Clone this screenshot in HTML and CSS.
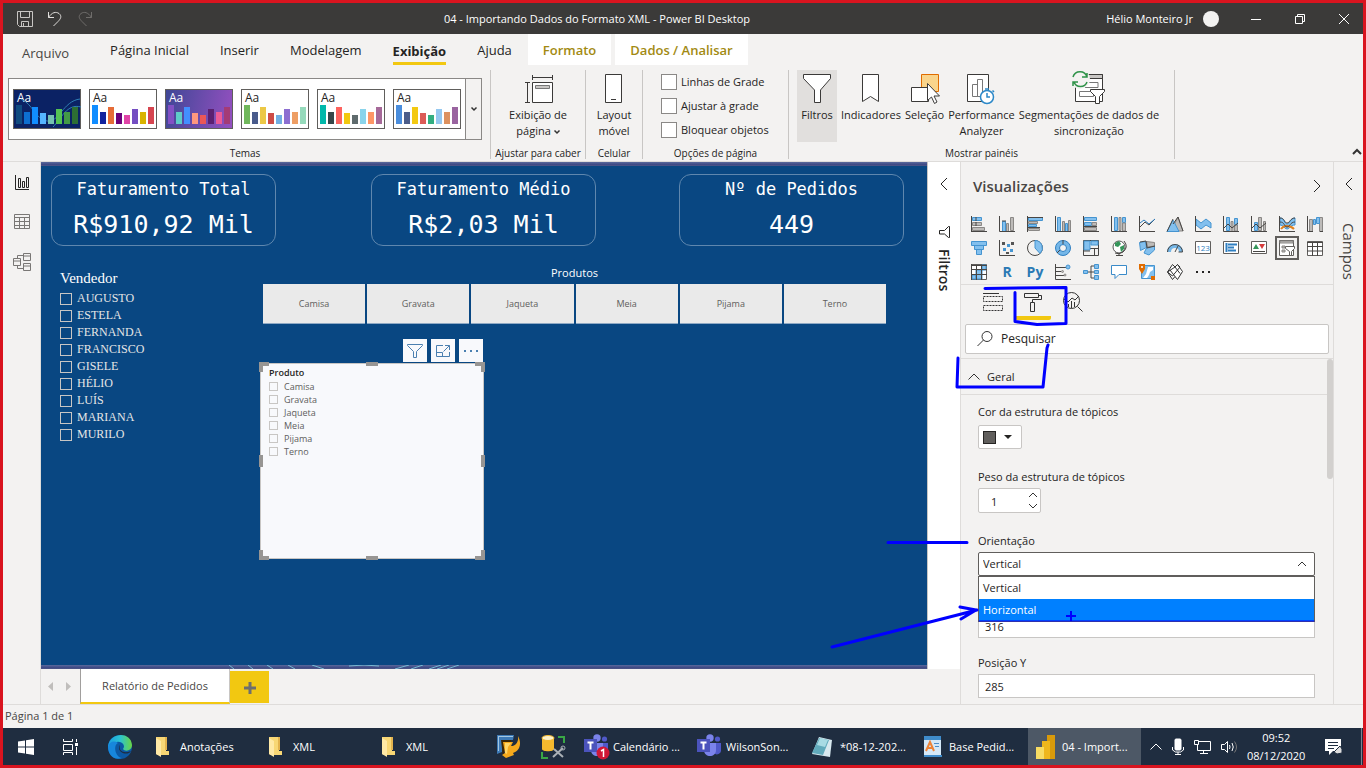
FILE: index.html
```html
<!DOCTYPE html>
<html lang="pt-BR">
<head>
<meta charset="utf-8">
<meta name="viewport" content="width=device-width, initial-scale=1">
<title>04 - Importando Dados do Formato XML - Power BI Desktop</title>
<link rel="stylesheet" href="styles.css">
</head>
<body>
<svg class="defs" aria-hidden="true">
  <symbol id="theme-bars" viewBox="0 0 68 40">
    <path fill="var(--c1)" d="M3 35V16h6v19z"/><path fill="var(--c2)" d="M11 35V23h6v12z"/><path fill="var(--c3)" d="M19 35V18h6v17z"/><path fill="var(--c4)" d="M27 35V24h6v11z"/><path fill="var(--c5)" d="M35 35V26h6v9z"/><path fill="var(--c6)" d="M43 35V20h6v15z"/><path fill="var(--c7)" d="M51 35V23h6v12z"/><path fill="var(--c8)" d="M59 35V18h6v17z"/>
  </symbol>
  <symbol id="folder" viewBox="0 0 16 20">
    <path fill="#f8d775" d="M1 0h10v14h3v4H3L1 17z"/><path fill="#e3b34e" d="M10 0l2 0v13h-2z"/><path fill="#ffe9a6" d="M1 1l5 3v16l-5-3z"/>
  </symbol>
  <symbol id="teams" viewBox="0 0 24 24">
    <circle cx="20.500" cy="5" r="2.600" fill="#5059c9"/><circle cx="13" cy="4" r="3.700" fill="#7b83eb"/>
    <path fill="#5059c9" d="M16 9h8v7a4 4 0 0 1-7 3z"/><path fill="#7b83eb" d="M7 9h12v7c0 8-12 8-12 0z"/>
    <path fill="#4b53bc" d="M0 5h13v13H0z"/><path stroke="#fff" stroke-width="2" d="M3.500 8.500h6M6.500 8v7.500"/>
  </symbol>
</svg>

<header class="titlebar">
  <div class="quick">
    <button aria-label="Salvar"><svg width="16" height="16" fill="none" stroke="#c8c6c4"><path d="M.5.5h15v15h-13l-2-2zM3.500.5v6h9v-6M4.500 15v-4.500h7V15M6.500 12v3"/></svg></button>
    <button aria-label="Desfazer"><svg width="16" height="16" fill="none" stroke="#e1dfdd"><path d="M1.500 1v5.500H7M1.500 6.500C5 1 9 .5 12 2.500c3 2.500 2 5-1 8L6.500 15"/></svg></button>
    <button aria-label="Refazer"><svg width="16" height="16" fill="none" stroke="#6f6d6b"><path d="M14.500 1v5.500H9M14.500 6.500C11 1 7 .5 4 2.500c-3 2.500-2 5 1 8L9.500 15"/></svg></button>
  </div>
  <h1 class="doc-title">04 - Importando Dados do Formato XML - Power BI Desktop</h1>
  <div class="account"><span>Hélio Monteiro Jr</span><span class="avatar"></span></div>
  <div class="window-buttons">
    <button aria-label="Minimizar"><svg width="12" height="12" stroke="#fff"><path d="M1 6.500h10"/></svg></button>
    <button aria-label="Restaurar"><svg width="12" height="12" fill="none" stroke="#fff"><path d="M1.500 3.500h7v7h-7zM3.500 3V1.500h7v7H9"/></svg></button>
    <button aria-label="Fechar"><svg width="12" height="12" stroke="#fff"><path d="M1 1l10 10M11 1L1 11"/></svg></button>
  </div>
</header>

<nav class="tabs">
  <button class="tab file">Arquivo</button>
  <button class="tab">Página Inicial</button>
  <button class="tab">Inserir</button>
  <button class="tab">Modelagem</button>
  <button class="tab active"><span>Exibição</span></button>
  <button class="tab">Ajuda</button>
  <button class="tab context">Formato</button>
  <button class="tab context">Dados / Analisar</button>
</nav>

<section class="ribbon">
  <div class="group themes">
    <div class="gallery">
      <button class="theme t1">Aa<svg><path fill="none" stroke="#2f7fb5" stroke-width="1" d="M8 10c12 5 14 20 26 22s16-20 33-22M40 38c8-8 14-24 28-20"/><use href="#theme-bars"/></svg></button>
      <button class="theme t2">Aa<svg><use href="#theme-bars"/></svg></button>
      <button class="theme t3">Aa<svg><use href="#theme-bars"/></svg></button>
      <button class="theme t4">Aa<svg><use href="#theme-bars"/></svg></button>
      <button class="theme t5">Aa<svg><use href="#theme-bars"/></svg></button>
      <button class="theme t6">Aa<svg><use href="#theme-bars"/></svg></button>
      <button class="more" aria-label="Mais temas"><svg width="6" height="4" fill="none" stroke="#333" stroke-width="1.500"><path d="M.5.5L3 3 5.500.5"/></svg></button>
    </div>
    <div class="caption">Temas</div>
  </div>
  <div class="group fit">
    <div class="tools"><button class="tool"><svg width="30" height="30" fill="none" stroke="#3b3a39"><path d="M9.500 1v5M29.500 1v5M9.500 3.500h20M2 8.500h5M2 28.500h5M4.500 8.500v20"/><path fill="#fff" d="M9.500 8.500h20v20h-20z"/><path fill="#c8c6c4" stroke="#777" d="M12.500 11.500h14v3h-14z"/></svg><span>Exibição de<br>página <svg class="chev" width="6" height="4" fill="none" stroke="#333" stroke-width="1.500"><path d="M.5.5L3 3 5.500.5"/></svg></span></button></div>
    <div class="caption">Ajustar para caber</div>
  </div>
  <div class="group mobile">
    <div class="tools"><button class="tool"><svg width="18" height="30" stroke="#3b3a39"><path fill="#fff" d="M.5.5h16v28H.5z"/><path d="M6 25.500h5"/></svg><span>Layout<br>móvel</span></button></div>
    <div class="caption">Celular</div>
  </div>
  <div class="group options">
    <div class="checks">
      <label><input type="checkbox">Linhas de Grade</label>
      <label><input type="checkbox">Ajustar à grade</label>
      <label><input type="checkbox">Bloquear objetos</label>
    </div>
    <div class="caption">Opções de página</div>
  </div>
  <div class="group panes">
    <div class="tools">
      <button class="tool pressed"><svg width="28" height="30" fill="#fff" stroke="#3b3a39"><path d="M.5.5h27v4L17.500 16v12.500h-6V16L.5 4.500z"/></svg><span>Filtros</span></button>
      <button class="tool"><svg width="18" height="30" fill="#fff" stroke="#3b3a39"><path d="M.5.5h16v27l-8-5-8 5z"/></svg><span>Indicadores</span></button>
      <button class="tool"><svg width="30" height="30"><path fill="#f9d48b" stroke="#e06c00" d="M11.500.5h17v17h-17z"/><path fill="#fff" stroke="#3b3a39" d="M1.500 13.500h17v14h-17z"/><path fill="#fff" stroke="#3b3a39" d="M17.500 9.500v17l4-3.500 3 6.500 2.500-1.500-3-6h5.500z"/></svg><span>Seleção</span></button>
      <button class="tool"><svg width="28" height="30" fill="#fff" stroke="#3b3a39"><path d="M.5.5h21v27H.5z"/><path stroke="#777" d="M5.500 10.500h5v12h-5zM10.500 5.500h5v17h-5z"/><circle cx="20" cy="23" r="6.500" stroke="#2b88c8" stroke-width="1.500"/><path fill="none" stroke="#2b88c8" stroke-width="1.500" d="M20 19v4h3M18 15h4M25.500 16.500l1.500 1.500"/></svg><span>Performance<br>Analyzer</span></button>
      <button class="tool"><svg width="34" height="30" fill="none" stroke="#3b3a39"><path fill="#fff" d="M3.500.5h27v27h-27z"/><path fill="#c8c6c4" d="M15 .5h15.500v4H15z"/><path stroke="#777" d="M15 8.500h11v5H13M7.500 17.500h14v5h-14z"/><path fill="#fff" d="M18.500 15.500h14v2l-5 5v7h-4v-7l-5-5z"/><circle cx="8" cy="5" r="10" fill="#f3f2f1" stroke="none"/><path stroke="#2e9248" stroke-width="1.500" d="M1 3c2-7 12-7 14 0M15 -1v4h-5M15 8C13 14 4 14 2 8M1 12V8h5"/></svg><span>Segmentações de dados de<br>sincronização</span></button>
    </div>
    <div class="caption">Mostrar painéis</div>
  </div>
  <button class="collapse" aria-label="Recolher"><svg width="10" height="6" fill="none" stroke="#333" stroke-width="2"><path d="M1 5l4-4 4 4"/></svg></button>
</section>

<main class="workspace">
  <nav class="views">
    <button aria-label="Relatório"><svg width="16" height="16" fill="none" stroke="#252423"><path d="M1.500 0v14.500H15M4.500 3.500h2v9h-2zM8.500 6.500h2v6h-2zM12.500 2.500h2v10h-2z"/></svg></button>
    <button aria-label="Dados"><svg width="16" height="16" fill="none" stroke="#797775"><path d="M.5.5h15v14H.5zM0 3.500h16M0 7.500h16M0 11.500h16M5.500 3v12M10.500 3v12"/></svg></button>
    <button aria-label="Modelo"><svg width="18" height="18" fill="none" stroke="#797775"><path d="M.5 5.500h7v7h-7zM.5 8h7M10.500.5h7v7h-7zM10.500 3h7M10.500 10.500h7v7h-7zM10.500 13h7M4.500 5V2.500h6M4.500 13v2.500h6"/></svg></button>
  </nav>

  <div class="center">
    <div class="stage">
      <section class="canvas">
        <div class="edge"></div>
        <div class="report">
          <div class="cards">
            <article class="card"><h2>Faturamento Total</h2><p>R$910,92 Mil</p></article>
            <article class="card"><h2>Faturamento Médio</h2><p>R$2,03 Mil</p></article>
            <article class="card"><h2>Nº de Pedidos</h2><p>449</p></article>
          </div>
          <div class="visuals">
            <fieldset class="sellers">
              <legend>Vendedor</legend>
              <label><input type="checkbox">AUGUSTO</label>
              <label><input type="checkbox">ESTELA</label>
              <label><input type="checkbox">FERNANDA</label>
              <label><input type="checkbox">FRANCISCO</label>
              <label><input type="checkbox">GISELE</label>
              <label><input type="checkbox">HÉLIO</label>
              <label><input type="checkbox">LUÍS</label>
              <label><input type="checkbox">MARIANA</label>
              <label><input type="checkbox">MURILO</label>
            </fieldset>
            <div class="products">
              <h3>Produtos</h3>
              <div class="tiles">
                <button>Camisa</button><button>Gravata</button><button>Jaqueta</button><button>Meia</button><button>Pijama</button><button>Terno</button>
              </div>
              <div class="selected">
                <div class="actions">
                  <button aria-label="Filtros"><svg width="18" height="16" fill="none" stroke="#4a7fb0"><path d="M1.500 1.500h15v1l-6 6v6h-3v-6l-6-6z"/></svg></button>
                  <button aria-label="Modo de foco"><svg width="16" height="14" fill="none" stroke="#4a7fb0"><path d="M8 1.500H1.500v11h13V8M1.500 8.500h6v4M8.500 7.500l6-6M10 1.500h4.500V6"/></svg></button>
                  <button aria-label="Mais opções"><svg width="16" height="4" fill="#4a7fb0"><path d="M1 1h2v2H1zM7 1h2v2H7zM13 1h2v2h-2z"/></svg></button>
                </div>
                <fieldset class="slicer">
                  <legend>Produto</legend>
                  <label><input type="checkbox">Camisa</label>
                  <label><input type="checkbox">Gravata</label>
                  <label><input type="checkbox">Jaqueta</label>
                  <label><input type="checkbox">Meia</label>
                  <label><input type="checkbox">Pijama</label>
                  <label><input type="checkbox">Terno</label>
                  <svg class="handles" viewBox="0 0 226 198" preserveAspectRatio="none" fill="#979593"><path d="M0 0h10v4H4v6H0zM107 0h12v4h-12zM216 0h10v10h-4V4h-6zM0 93h4v12H0zM222 93h4v12h-4zM0 188h4v6h6v4H0zM107 194h12v4h-12zM222 188h4v10h-10v-4h6z"/></svg>
                </fieldset>
              </div>
            </div>
          </div>
        </div>
        <div class="edge"><svg viewBox="0 0 886 4" preserveAspectRatio="none" fill="none" stroke="#76b9d2"><path d="M188 0l5 4M207 0l5 4M226 0l6 4M247 0l7 4M271 0l12 4M308 1q15-2 30 0M354 4l14-4M370 4l12-4M388 4l12-4M396 4l12-4M406 4l12-4"/></svg></div>
      </section>
      <aside class="filters">
        <button aria-label="Expandir filtros"><svg width="8" height="14" fill="none" stroke="#252423"><path d="M7 1L1 7l6 6"/></svg></button>
        <svg width="12" height="12" fill="none" stroke="#252423"><path d="M11.500.5v11h-1L6.500 8H1.500V4.500h5l4-4z"/></svg>
        <h2>Filtros</h2>
      </aside>
    </div>
    <div class="pages">
      <button class="arrow" aria-label="Anterior"><svg width="5" height="9" fill="#c0bebc"><path d="M5 0v9L0 4.500z"/></svg></button>
      <button class="arrow" aria-label="Próxima"><svg width="5" height="9" fill="#c0bebc"><path d="M0 0v9l5-4.500z"/></svg></button>
      <button class="page">Relatório de Pedidos</button>
      <button class="add" aria-label="Nova página"><svg width="12" height="12" stroke="#6e6e6e" stroke-width="3"><path d="M6 0v12M0 6h12"/></svg></button>
    </div>
  </div>

  <aside class="pane">
    <header class="pane-head"><h2>Visualizações</h2><button aria-label="Recolher"><svg width="8" height="14" fill="none" stroke="#252423"><path d="M1 1l6 6-6 6"/></svg></button></header>
    <div class="visual-types">
      <button aria-label="Barras empilhadas"><svg class="vi"><path class="g" d="M1.500 6.500h9v3h-9zM1.500 11.500h12v3h-12z"/><path class="b" d="M1.500 1.500h9v3h-9z"/><path class="a" d="M.5 0v16M5 1v4M5 6v4M0 15.500h16"/></svg></button>
      <button aria-label="Colunas empilhadas"><svg class="vi"><path class="g" d="M11.500 1.500h3v13h-3zM7.500 7.500h2v8h-2z"/><path class="b" d="M3.500 5.500h3v10h-3z"/><path class="a" d="M.5 0v15.500H16M3 5h4"/></svg></button>
      <button aria-label="Barras clusterizadas"><svg class="vi"><path class="b" d="M1.500 1.500h14v3h-14zM1.500 8.500h8v2h-8z"/><path class="g" d="M1.500 5.500h9v2h-9zM1.500 12.500h11v2h-11z"/><path class="a" d="M.5 0v16M1 1.500h15M1 11.500h12"/></svg></button>
      <button aria-label="Colunas clusterizadas"><svg class="vi"><path class="b" d="M2.500 1.500h3v14h-3zM10.500 7.500h2v8h-2z"/><path class="g" d="M7.500 5.500h2v10h-2zM13.500 4.500h2v11h-2z"/><path class="a" d="M.5 0v15.500H16"/></svg></button>
      <button aria-label="Barras 100%"><svg class="vi"><path class="b" d="M1.500 1.500h12v3h-12zM1.500 6.500h7v3h-7z"/><path class="g" d="M9 6.500h4.500v3H9zM1.500 11.500h12v3h-12z"/><path class="a" d="M.5 0v16M0 15.500h16M1 10.500h13"/></svg></button>
      <button aria-label="Colunas 100%"><svg class="vi"><path class="b" d="M3.500 1.500h3v13h-3zM11.500 1.500h3v5h-3z"/><path class="g" d="M8 1.500h2v13H8zM11.500 7h3v8h-3z"/><path class="a" d="M.5 0v15.500H16"/></svg></button>
      <button aria-label="Linhas"><svg class="vi"><path class="a" d="M.5 0v15.500H16M1 11l5-5 4 3 6-6"/><path class="l" d="M1 7l4-3 5 4 6-5"/></svg></button>
      <button aria-label="Área"><svg class="vi"><path class="g" d="M4 15l7-14 5 14z"/><path class="b" d="M0 15.500L6 4l6 11.500z"/><path class="a" d="M0 15.500L6 3M6 8l5-7 5 14"/></svg></button>
      <button aria-label="Área empilhada"><svg class="vi"><path class="b" d="M1 3l5 4 5-4 5 4v5l-5-3-5 4-5-4z"/><path class="a" d="M.5 0v15.500H16"/></svg></button>
      <button aria-label="Linha e coluna empilhada"><svg class="vi"><path class="b" d="M3.500 1.500h3v13h-3zM11.500 2.500h3v6h-3z"/><path class="g" d="M8 5.500h2v10H8zM11.500 9h3v6h-3z"/><path class="a" d="M.5 0v15.500H16M1 12l4-4 4 4 6-5"/></svg></button>
      <button aria-label="Linha e coluna"><svg class="vi"><path class="b" d="M3.500 6.500h3v8h-3z"/><path class="g" d="M7.500 1.500h3v13h-3zM12.500 5.500h2v9h-2z"/><path class="a" d="M.5 0v15.500H16M1 12l4-4 4 4 6-5"/></svg></button>
      <button aria-label="Faixa de opções"><svg class="vi"><path class="b" d="M1 2c5 0 4 6 7 6s3-6 8-6v7c-5 0-5 4-8 4s-3-4-7-4z"/><path class="o" d="M2 13c3-4 4-3 6-3s4 0 7 3"/><path class="a" d="M.5 0v15.500H16M1 2c5 0 4 5 7 5s3-5 8-5M1 6c5 0 4 5 7 5s3-5 8-5"/></svg></button>
      <button aria-label="Cascata"><svg class="vi"><path class="g" d="M2.500 3.500h3v12h-3zM12.500 1.500h3v14h-3z"/><path class="b" d="M6.500 3.500h2v5h-2zM9.500 1.500h3v6h-3z"/><path class="a" d="M.5 0v15.500H6M13 15.500h3"/></svg></button>
      <button aria-label="Funil"><svg class="vi"><path class="b" d="M.5 1.500h15v4H.5zM3.500 5.500h9v4h-9zM5.500 9.500h5v5h-5z"/></svg></button>
      <button aria-label="Dispersão"><svg class="vi"><path class="a" d="M.5 0v15.500H16"/><path fill="#4696d2" d="M4 8h3v3H4zM8 4h3v3H8zM11 9h3v3h-3z"/><path fill="#555" d="M3 2h3v3H3zM12 2h3v3h-3zM7 12h3v2H7z"/></svg></button>
      <button aria-label="Pizza"><svg class="vi"><circle class="a" cx="8" cy="8" r="7.500"/><path class="b" d="M8 .5a7.500 7.500 0 0 1 5 13L8 8z"/></svg></button>
      <button aria-label="Rosca"><svg class="vi"><circle cx="8" cy="8" r="5.500" fill="none" stroke="#75b7e8" stroke-width="4"/><circle class="l" cx="8" cy="8" r="7.500"/><circle class="l" cx="8" cy="8" r="3.500"/><path class="a" d="M8 0v4M2 13l3-3"/></svg></button>
      <button aria-label="Treemap"><svg class="vi"><path class="a" d="M.5 .5h15v15H.5zM7 8.500h9M11.500 9v6"/><path class="b" d="M1 1h6v9H1zM8 1h7v4H8z"/><path class="a" d="M1 11h6"/></svg></button>
      <button aria-label="Mapa"><svg class="vi"><circle cx="8" cy="7" r="6" fill="#fff" stroke="#555"/><path fill="#35965a" d="M4 3l4-2 2 3-3 3-3-1zM9 7l4-2v4l-3 3z"/><path class="a" d="M13 1q5 6-1 11-4 3-8 1M5 15.500h7M8 13v2"/></svg></button>
      <button aria-label="Mapa coroplético"><svg class="vi"><path class="b" d="M.5 2.500l6-1 1 6-6 3zM9 7l6.500-1v4L10 15l-5-2 2-4z"/><path class="g" d="M7.500 1.500l8 1V6l-7 1z"/><path class="a" d="M1 2l6-1 1 7 8-2"/></svg></button>
      <button aria-label="Medidor"><svg class="vi"><path fill="none" stroke="#75b7e8" stroke-width="4" d="M2 12a6 6 0 0 1 12 0"/><path class="a" d="M.5 12a7.500 7.500 0 0 1 15 0h-4M8 12l3-6"/></svg></button>
      <button aria-label="Cartão"><svg class="vi"><path class="w" d="M.5 1.500h15v12H.5z"/><text class="num" x="8" y="11">123</text></svg></button>
      <button aria-label="Cartão de linha múltipla"><svg class="vi"><path class="w" d="M.5 1.500h15v12H.5z"/><path class="k" d="M3.500 3v9M5 4.500h9M5 7.500h6M5 10.500h8"/></svg></button>
      <button aria-label="KPI"><svg class="vi"><path class="w" d="M.5 1.500h15v12H.5z"/><path fill="#35965a" d="M2 9l3-5 3 5z"/><path fill="#d63b3b" d="M8 4h6l-3 5z"/><path class="a" d="M2 11.500h12"/></svg></button>
      <button class="picked" aria-label="Segmentação de dados"><svg class="vi"><path class="w" d="M.5.5h14v15H.5z"/><path class="g" d="M1 1h13v2H1zM3 6h3v2H3zM3 10h3v2H3z"/><path class="w" d="M6.500 6.500h9v2l-3 3v4h-2v-4l-4-3z"/></svg></button>
      <button aria-label="Tabela"><svg class="vi"><path class="w" d="M.5 1.500h15v14H.5z"/><path class="a" d="M0 2.500h16M0 6.500h16M0 11h16M5.500 2v14M10.500 2v14"/></svg></button>
      <button aria-label="Matriz"><svg class="vi"><path class="w" d="M.5.5h15v15H.5z"/><path class="b" d="M5 6h6v9H5zM11 1h4v5h-4zM1 11h4v4H1z"/><path class="a" d="M0 1.500h16M0 5.500h16M0 10.500h16M5.500 1v15M10.500 1v15M.5 0v16"/></svg></button>
      <button class="letters">R</button>
      <button class="letters">Py</button>
      <button aria-label="Influenciadores"><svg class="vi"><path class="a" d="M.5 0v15.500H16M1 3.500h10M1 7.500h5M1 11.500h8"/><circle class="b" cx="13" cy="3" r="2"/><circle class="g" cx="7.500" cy="7.500" r="1"/><circle class="g" cx="10" cy="11" r="1"/></svg></button>
      <button aria-label="Árvore de decomposição"><svg class="vi"><path class="a" d="M5 8h3M12 2H8v12h4M8 8h4"/><path class="b" d="M.5 6.500h4v3h-4zM11.500.5h4v4h-4zM11.500 6.500h4v3h-4zM11.500 11.500h4v4h-4z"/></svg></button>
      <button aria-label="Perguntas"><svg class="vi"><path fill="#fff" stroke="#3a8bc9" d="M.5 1.500h15v9H8l-4 4v-4H.5z"/></svg></button>
      <button aria-label="ArcGIS"><svg class="vi"><path class="b" d="M2.500 1.500h13v13h-13z"/><path fill="#fff" d="M9 3h5v3l-3 2-1 3-2 3H4l3-4z"/><path fill="#e06c00" d="M0 0h6v5l-3 5-3-5zM12 12h4v4h-4z"/><circle cx="3" cy="3" r="1" fill="#fff"/></svg></button>
      <button aria-label="Power Apps"><svg class="vi" fill="#fff" stroke="#333"><path d="M5.500.5L8 3l-7.500 5M8 3l2.500-2.500L13 3 5.500 12 .5 8 5.500.5M10.500.5l5 7-5 8-2.500-3-2.500 3L.5 8M8 12.500L3 6M8 3l5 6.500"/></svg></button>
      <button aria-label="Mais"><svg class="vi" fill="#252423"><path d="M1 7h2v2H1zM7 7h2v2H7zM13 7h2v2h-2z"/></svg></button>
    </div>
    <div class="pane-tabs">
      <button aria-label="Campos"><svg width="20" height="20" fill="none" stroke="#333"><path d="M0 1.500h16"/><path stroke-dasharray="2 1" d="M.5 4.500h19v5H.5zM.5 13.500h19v5H.5z"/></svg></button>
      <button class="on" aria-label="Formato"><svg width="20" height="20" fill="none" stroke="#333"><path d="M1.500 1.500h14v4h-14zM16 3.500h2.500v4h-9v3M7.500 10.500h4v9h-4z"/></svg></button>
      <button aria-label="Análise"><svg width="20" height="20" fill="none" stroke="#333"><circle cx="8.500" cy="8.500" r="8"/><path d="M1 7l4 3 4-4 3 2 4-4M5.500 12v3M8.500 9v7M11.500 10v5M14.500 14.500l5 5"/></svg></button>
    </div>
    <label class="search"><svg width="16" height="16" fill="none" stroke="#333"><circle cx="10" cy="5.500" r="5"/><path d="M6.500 9L.5 15"/></svg><input type="text" placeholder="Pesquisar" aria-label="Pesquisar"></label>
    <div class="scroller">
      <button class="section"><svg width="12" height="7" fill="none" stroke="#333"><path d="M.5 6.500L6 1l5.500 5.500"/></svg>Geral</button>
      <div class="fields">
        <div class="field roomy"><label for="color">Cor da estrutura de tópicos</label>
          <button id="color" class="swatch"><i></i><svg width="8" height="4" fill="#252423"><path d="M0 0h8L4 4z"/></svg></button></div>
        <div class="field"><label for="weight">Peso da estrutura de tópicos</label>
          <div class="spin"><input id="weight" type="text" value="1"><svg width="10" height="18" fill="none" stroke="#333"><path d="M1 5l4-4 4 4M1 12l4 4 4-4"/></svg></div></div>
        <div class="field combo"><label for="orientation">Orientação</label>
          <select id="orientation"><option>Vertical</option><option>Horizontal</option></select>
          <svg class="combo-arrow" width="10" height="6" fill="none" stroke="#333"><path d="M1 5l4-4 4 4"/></svg>
          <ul class="menu" role="listbox"><li role="option">Vertical</li><li role="option" class="hover" aria-selected="true">Horizontal</li></ul></div>
        <div class="position">
          <div class="field covered"><input type="text" value="316" aria-label="Posição X"></div>
          <div class="field"><label for="py">Posição Y</label><input id="py" type="text" value="285"></div>
        </div>
      </div>
      <span class="thumb"></span>
    </div>
  </aside>
  <aside class="fields-strip">
    <button aria-label="Expandir campos"><svg width="8" height="14" fill="none" stroke="#252423"><path d="M7 1L1 7l6 6"/></svg></button>
    <h2>Campos</h2>
  </aside>
</main>

<footer class="status">Página 1 de 1</footer>

<footer class="taskbar">
  <button class="sys" aria-label="Iniciar"><svg width="16" height="16" fill="#fff"><path d="M0 2.500l7-1v6H0zM8 1.300L16 0v7.500H8zM0 8.500h7v6l-7-1zM8 8.500h8V16l-8-1.300z"/></svg></button>
  <button class="sys" aria-label="Visão de tarefas"><svg width="17" height="16" fill="none" stroke="#fff"><path d="M1.500 0v2.500h9V0M1.500 5.500h9v6h-9zM1.500 16v-2.500h9V16M14.500 0v3M14.500 8v8"/><path fill="#fff" stroke="none" d="M13 4h3v3h-3z"/></svg></button>
  <button class="sys edge-app" aria-label="Edge"><svg width="24" height="24" viewBox="0 0 24 24"><defs><linearGradient id="eg"><stop stop-color="#1b9de2"/><stop offset=".5" stop-color="#2bc3d2"/><stop offset="1" stop-color="#6ad643"/></linearGradient></defs><circle cx="12" cy="12" r="12" fill="#0c59a4"/><path fill="url(#eg)" d="M0 11C2-3 23-4 24 10c0 6-7 7-9 4 3-3-1-8-6-7C5 7 2 9 0 13z"/><path fill="#1787dc" d="M0 12c1-5 6-7 10-4-5 2-3 14 4 15C5 26 0 19 0 12z"/><path fill="#1f2d40" d="M12 10c-2 6 4 9 11 6-3 5-12 2-12-3 0-1 0-2 1-3z"/></svg></button>
  <button class="task"><svg width="16" height="20"><use href="#folder"/></svg><span>Anotações</span></button>
  <button class="task"><svg width="16" height="20"><use href="#folder"/></svg><span>XML</span></button>
  <button class="task"><svg width="16" height="20"><use href="#folder"/></svg><span>XML</span></button>
  <button class="sys" aria-label="Importador"><svg width="24" height="24"><path fill="#3d79b5" d="M0 0h17l-1 5H6L5 17l-5 2z"/><path fill="#a3c7e2" d="M1 1h15v1H2v14H1z"/><path fill="#3a2505" d="M4 5h10v4H9l-3 13z"/><path fill="#f5a91c" d="M6 7h10l-2 4c5 0 8-5 7-10 4 7 2 15-5 17l1 2-8 3-4-3 3-2z"/><path fill="#ffd667" d="M8 8h6l-3 4-1 7-2-1z"/></svg></button>
  <button class="sys" aria-label="SQL"><svg width="25" height="24" fill="none"><path fill="#f4b92e" d="M1 3v11c0 3 12 3 12 0V3z"/><ellipse cx="7" cy="3" rx="6" ry="2.500" fill="#fff1c7" stroke="#f4b92e"/><path stroke="#39a845" stroke-width="2" d="M17 2h6v6M1 17v6h6"/><path stroke="#aab0b6" stroke-width="2" d="M12 22l10-9M13 14l9 8"/><circle cx="22" cy="13" r="2" stroke="#aab0b6"/></svg></button>
  <button class="task"><svg width="26" height="26"><use href="#teams" width="24" height="24"/><circle cx="19" cy="19" r="6.500" fill="#d01736"/><path fill="none" stroke="#fff" stroke-width="1.500" d="M17 17l2.500-1.500V23"/></svg><span>Calendário ...</span></button>
  <button class="task"><svg width="26" height="26"><use href="#teams" width="24" height="24"/></svg><span>WilsonSon...</span></button>
  <button class="task"><svg width="24" height="24"><path fill="#d8e9ef" d="M9 2l13 3-2 17L2 19z"/><path fill="#61aabb" d="M9 3l10 2-6 15-11-2z"/><path fill="#a8dbe4" d="M10 3l8 2-3 7-8-2z"/></svg><span>*08-12-202...</span></button>
  <button class="task"><svg width="20" height="22"><path fill="#d5e8f7" d="M1 1h17v20H1z"/><path fill="#3f8ccb" d="M1 0h17v4H1zM1 19h18v2H1z"/><path stroke="#ee8336" stroke-width="2" fill="none" d="M3 15l4-9 4 9M4 12h6"/><path stroke="#4d8dc8" d="M11 7.500h5M12 10.500h4"/></svg><span>Base Pedid...</span></button>
  <button class="task current"><svg width="20" height="24"><path fill="#d99a0a" d="M11 0h8v24h-8z"/><path fill="#efb71c" d="M6 6h8v18H6z"/><path fill="#f8dc63" d="M0 12h8v12H0z"/></svg><span>04 - Import...</span></button>
  <div class="tray">
    <svg width="12" height="7" fill="none" stroke="#fff"><path d="M.5 6.500L6 1l5.500 5.500"/></svg>
    <svg width="12" height="16" fill="none" stroke="#fff"><rect x="3" width="6" height="11" rx="1" fill="#fff"/><path d="M.5 8v3l3 2h5l3-2V8M6 13v2.500M3 15.500h6"/></svg>
    <svg width="17" height="14" fill="none" stroke="#fff"><path d="M5 1.500h11.500v9H3.500V5M.5.5h4v4h-4zM9.500 11v2.500M6 13.500h8"/></svg>
    <svg width="16" height="14" fill="none" stroke="#fff"><path d="M.5 4.500h3l3-3v11l-3-3h-3zM8.500 5q1 2 0 4M11 3q2.500 4 0 8"/><path stroke="#777" d="M13.500 1.500q4 5.500 0 11"/></svg>
    <time>09:52<br>08/12/2020</time>
    <svg class="notices" width="17" height="16"><path fill="#fff" d="M0 0h16v12h-8l-4 4v-4H0z"/><path stroke="#1f2d40" d="M3 3.500h10M3 6.500h10M3 9.500h6"/><path fill="#ddd" stroke="#1f2d40" d="M9 13l6-6 2 3v4l-5 1z"/></svg>
  </div>
</footer>

<svg class="ink" viewBox="0 0 1366 768" preserveAspectRatio="none" fill="none" stroke="#00f" stroke-width="3" stroke-linecap="round" stroke-linejoin="round" aria-hidden="true">
  <path d="M985 288.500l81-1v36l-29 1-22-3 0-29M958 358l-1 29h86l4-39M1047 348l1-3M888 542.500h79M832 647l145-37M960 607l16 3-15 9"/>
  <path stroke-width="1" d="M979 621h335"/><path stroke-width="2" stroke-linecap="butt" d="M1066 616h10M1071 611v10"/>
</svg>
</body>
</html>
```
FILE: styles.css
```css
* { box-sizing: border-box; }
body {
  margin: 0;
  min-height: 100vh;
  display: flex;
  flex-direction: column;
  position: relative;
  border: 3px solid #d9141f;
  background: #f3f2f1;
  color: #252423;
  font: 11px/16px "Open Sans", "Noto Sans", sans-serif;
}
button, input, select { font: inherit; color: inherit; }
button { border: 0; padding: 0; background: none; }
h1, h2, h3, p, ul { margin: 0; padding: 0; font: inherit; }
ul { list-style: none; }
fieldset { border: 0; margin: 0; padding: 0; min-width: 0; }
legend { padding: 0; }
svg { flex: none; overflow: visible; }
.defs { position: absolute; width: 0; height: 0; }
input[type="checkbox"] { appearance: none; margin: 0; flex: none; }

/* title bar */
.titlebar {
  display: flex;
  align-items: center;
  justify-content: flex-end;
  position: relative;
  height: 31px;
  background: #3b3a39;
  color: #fff;
  font-size: 11px;
}
.quick { display: flex; gap: 14px; margin-left: 14px; margin-right: auto; }
.quick svg, .window-buttons svg { display: block; }
.doc-title { position: absolute; left: 0; right: 172px; text-align: center; pointer-events: none; }
.account { display: flex; align-items: center; gap: 10px; margin-right: 31px; }
.avatar { width: 16px; height: 16px; border-radius: 50%; background: #f3f2f1; }
.window-buttons { display: flex; gap: 32px; margin-right: 13px; }

/* ribbon tabs */
.tabs { display: flex; align-items: stretch; gap: 1px; height: 32px; padding-left: 3px; font-size: 13px; }
.tab { padding: 0 15px; height: 32px; }
.file { padding: 6px 25px 0 16px; color: #484644; }
.active { font-weight: 700; }
.active span { display: block; height: 30px; padding-top: 8px; border-bottom: 3px solid #f2c811; }
.context { height: 31px; margin-right: 3px; background: #fff; color: #a28a12; font-weight: 600; }

/* ribbon */
.ribbon { display: flex; height: 96px; padding: 4px 0 2px; border-bottom: 1px solid #dedcda; position: relative; }
.group { display: flex; flex-direction: column; justify-content: space-between; border-right: 1px solid #c8c6c4; }
.caption { font-size: 10px; line-height: 12px; text-align: center; }
.themes { width: 488px; padding: 8px 8px 0 5px; }
.gallery { display: flex; align-items: center; gap: 8px; height: 62px; padding-left: 4px; border: 1px solid #8a8886; background: #fff; }
.theme { position: relative; width: 68px; height: 40px; padding: 1px 3px; border: 1px solid #605e5c; background: #fff; font-size: 12px; line-height: 14px; text-align: left; display: flex; color: #252423; }
.theme svg { position: absolute; top: -1px; left: -1px; width: 68px; height: 40px; }
.more { flex: 1; align-self: stretch; margin-left: -4px; border-left: 1px solid #8a8886; background: #f3f2f1; display: flex; align-items: center; justify-content: center; }
.t1 { --c1: #104b80; --c2: #0d6fd0; --c3: #118dff; --c4: #55b5ff; --c5: #74c1b1; --c6: #54c254; --c7: #439a46; --c8: #2d6e34; background: #0b2264; color: #fff; }
.t2 { --c1: #118dff; --c2: #12239e; --c3: #e66c37; --c4: #6b007b; --c5: #e044a7; --c6: #744ec2; --c7: #d9b300; --c8: #d64550; }
.t3 { --c1: #8250c4; --c2: #5ecbc8; --c3: #438fff; --c4: #ff977e; --c5: #eb5757; --c6: #5b2071; --c7: #ec5a96; --c8: #a43b76; background: linear-gradient(100deg, #3f4796, #9450c0); color: #fff; }
.t4 { --c1: #70b75c; --c2: #495b8c; --c3: #ecc846; --c4: #cd4c46; --c5: #71afe2; --c6: #8d6fd1; --c7: #ee9e64; --c8: #95dabb; }
.t5 { --c1: #01b8aa; --c2: #374649; --c3: #fd625e; --c4: #f2c80f; --c5: #5f6b6d; --c6: #8ad4eb; --c7: #fe9666; --c8: #a66999; }
.t6 { --c1: #4a8ddc; --c2: #4c5d8a; --c3: #f3c911; --c4: #dc5b57; --c5: #33ae81; --c6: #95c8f0; --c7: #dd915f; --c8: #9a64a0; }
.fit { width: 95px; }
.mobile { width: 57px; }
.options { width: 146px; }
.panes { width: 386px; }
.tools { display: flex; justify-content: center; }
.panes .tools { justify-content: flex-start; gap: 4px; padding-left: 8px; }
.tool { display: flex; flex-direction: column; align-items: center; justify-content: flex-start; gap: 3px; padding-top: 4px; height: 72px; text-align: center; white-space: nowrap; }
.tool .chev { vertical-align: middle; }
.pressed { width: 40px; background: #e1dfdd; }
.checks { display: grid; gap: 8px; padding: 4px 0 0 18px; }
.checks label { display: flex; align-items: center; gap: 4px; }
.checks input { width: 16px; height: 16px; border: 1px solid #8a8886; background: #fff; }
.collapse { position: absolute; right: 1px; bottom: 6px; }
.collapse svg { display: block; }

/* workspace */
.workspace { flex: 1; display: flex; border-bottom: 1px solid #dedcda; }
.views { width: 38px; padding-top: 13px; border-right: 1px solid #dedcda; display: flex; flex-direction: column; align-items: center; gap: 23px; }
.views svg { display: block; }
.center { flex: 1; min-width: 0; display: flex; flex-direction: column; }
.stage { flex: 1; display: flex; background: #fff; }
.canvas { flex: 1; min-width: 0; display: flex; flex-direction: column; background: #094782; border-right: 1px solid #c8c6c4; }
.edge { height: 4px; overflow: hidden; background: linear-gradient(#5a6a9c, #3f4a86 60%, #4d5685); }
.edge svg { display: block; width: 100%; height: 4px; }
.report { flex: 1; padding: 8px 23px 0 10px; }
.cards { display: grid; grid-template-columns: 225fr 95fr 225fr 83fr 225fr; }
.card { height: 72px; padding-top: 3px; border: 1px solid #5f87ae; border-radius: 12px; color: #fff; font-family: "DejaVu Sans Mono", monospace; text-align: center; white-space: nowrap; }
.card:nth-child(2) { grid-column: 3; }
.card:nth-child(3) { grid-column: 5; }
.card h2 { font-size: 17px; line-height: 22px; }
.card p { font-size: 25px; line-height: 32px; padding-top: 9px; }
.visuals { display: grid; grid-template-columns: 200px 1fr; padding: 20px 18px 0 9px; }
.sellers { padding-top: 2px; color: #e6e6e6; font: 12px/17px "Liberation Serif", serif; }
.sellers legend { float: left; width: 100%; padding-bottom: 2px; color: #fff; font-size: 15px; line-height: 20px; }
.sellers label { display: flex; align-items: center; gap: 5px; clear: both; }
.sellers input { width: 12px; height: 12px; border: 1px solid #c8c6c4; }
.products { padding-left: 3px; }
.products h3 { color: #fff; font-size: 11px; line-height: 14px; text-align: center; }
.tiles { display: flex; gap: 2px; padding-top: 4px; }
.tiles button { flex: 1; height: 40px; background: #eaeaea; border-bottom: 1px solid #8fa9c4; color: #605e5c; font-size: 9px; }
.selected { width: 224px; margin-left: -3px; padding-top: 15px; }
.actions { display: flex; justify-content: flex-end; gap: 4px; padding: 0 1px 1px 0; }
.actions button { width: 24px; height: 23px; background: #f8f9fc; display: flex; align-items: center; justify-content: center; }
.slicer { position: relative; height: 196px; padding: 2px 8px; border: 1px solid #c8c6c4; background: #f8f9fc; color: #605e5c; font-size: 9px; line-height: 13px; }
.slicer legend { float: left; width: 100%; padding-bottom: 1px; color: #252423; font-size: 9px; font-weight: 600; line-height: 13px; }
.slicer label { display: flex; align-items: center; gap: 6px; clear: both; }
.slicer input { width: 9px; height: 9px; border: 1px solid #c8c6c4; }
.handles { position: absolute; top: -2px; left: -2px; width: calc(100% + 4px); height: calc(100% + 4px); }
.filters { width: 32px; padding-top: 15px; display: flex; flex-direction: column; align-items: center; font-weight: 600; }
.filters button svg, .fields-strip button svg { display: block; }
.filters > svg { margin: 35px 0 11px; }
.filters h2, .fields-strip h2 { writing-mode: vertical-rl; font-size: 15px; line-height: 20px; }
.filters h2 { font-size: 14px; }
.pages { display: flex; height: 35px; padding-left: 3px; color: #484644; }
.arrow { width: 12px; margin-right: 6px; }
.page { width: 150px; border-left: 1px solid #a19f9d; border-right: 1px solid #c8c6c4; border-bottom: 2px solid #f2c811; background: #fff; }
.add { width: 39px; height: 32px; margin-top: 2px; background: #f2c811; }
.add svg { vertical-align: middle; }

/* visualizations pane */
.pane { width: 374px; border-left: 1px solid #dedcda; border-right: 1px solid #dedcda; display: flex; flex-direction: column; }
.pane-head { display: flex; align-items: center; justify-content: space-between; padding: 12px; }
.pane-head h2 { font-size: 15px; line-height: 24px; font-weight: 600; color: #484644; }
.pane-head button svg { display: block; }
.visual-types { display: grid; grid-template-columns: repeat(13, 1fr); grid-auto-rows: 24px; padding: 2px 4px 0; border-bottom: 1px solid #dedcda; }
.visual-types button { display: flex; align-items: center; justify-content: center; }
.vi { width: 16px; height: 16px; }
.visual-types .picked { width: 22px; height: 22px; margin: 1px auto 0; outline: 2px solid #605e5c; outline-offset: -1px; }
.a { fill: none; stroke: #484644; }
.b { fill: #83c0ee; stroke: #4594d0; }
.g { fill: #bdbbb9; stroke: #8a8886; }
.l { fill: none; stroke: #2f7fc1; }
.o { fill: none; stroke: #e0801c; stroke-width: 2; }
.k { stroke: #2f7fc1; stroke-width: 2; }
.w { fill: #fff; stroke: #605e5c; }
.num { fill: #2f7fc1; font-size: 8px; text-anchor: middle; }
.letters { color: #2b7ab5; font-size: 14px; font-weight: 700; }
.pane-tabs { display: flex; height: 39px; padding: 7px 0 4px 14px; gap: 4px; }
.pane-tabs button { width: 36px; height: 28px; display: flex; justify-content: center; }
.pane-tabs .on { border-bottom: 4px solid #f2c811; border-radius: 0 0 2px 2px; }
.search { display: flex; align-items: center; gap: 8px; height: 30px; margin: 0 4px; padding-left: 11px; border: 1px solid #c8c6c4; border-radius: 2px; background: #fff; font-size: 12px; }
.search input { flex: 1; min-width: 0; padding: 0; border: 0; background: none; }
.search input::placeholder { color: #252423; opacity: 1; }
.scroller { position: relative; flex: 1; margin-top: 4px; border-top: 1px solid #dedcda; }
.section { display: flex; align-items: center; gap: 7px; width: 100%; height: 36px; padding-left: 7px; border-bottom: 1px solid #dedcda; }
.fields { display: grid; gap: 20px; padding: 9px 18px 0 17px; }
.position { display: grid; gap: 17px; }
.field { display: flex; flex-direction: column; align-items: flex-start; gap: 3px; position: relative; }
.roomy { gap: 5px; }
.covered { padding-top: 18px; }
.swatch { display: flex; align-items: center; gap: 8px; width: 44px; height: 24px; padding-left: 4px; border: 1px solid #c8c6c4; border-radius: 2px; background: #fff; }
.swatch i { width: 13px; height: 13px; border: 1px solid #252423; background: #605e5c; }
.field input { width: 100%; height: 24px; padding: 0 6px; border: 1px solid #c8c6c4; background: #fff; }
.spin { display: flex; align-items: center; width: 63px; height: 25px; padding-right: 2px; border: 1px solid #c8c6c4; border-radius: 2px; background: #fff; }
.field .spin input { flex: 1; min-width: 0; height: 22px; padding: 2px 0 0 12px; border: 0; background: none; }
.field select { appearance: none; width: 100%; height: 24px; padding: 0 4px; border: 1px solid #605e5c; border-radius: 2px; background: #fff; }
.combo-arrow { position: absolute; right: 8px; bottom: 9px; }
.menu { position: absolute; top: 100%; left: 0; right: 0; z-index: 1; border: 1px solid #605e5c; background: #fff; }
.menu li { padding: 0 4px; line-height: 22px; }
.menu .hover { background: #0080ff; color: #fff; }
.thumb { position: absolute; top: 0; right: 0; width: 6px; height: 120px; border-radius: 3px; background: #d2d0ce; }
.fields-strip { width: 29px; padding-top: 15px; display: flex; flex-direction: column; align-items: center; gap: 32px; }
.fields-strip h2 { color: #484644; }

/* status and taskbar */
.status { height: 23px; padding: 3px 2px; color: #484644; }
.taskbar { display: flex; height: 37px; background: #1f2d40; color: #fff; }
.sys { flex: none; width: 45px; display: flex; align-items: center; justify-content: center; }
.edge-app { width: 54px; }
.task { flex: none; width: 113px; display: flex; align-items: center; gap: 3px; padding-left: 8px; white-space: nowrap; }
.task svg[width="16"] { margin-right: 6px; }
.task svg[width="24"], .task svg[width="20"] { margin-right: 3px; }
.current { background: #4d5866; }
.tray { flex: 1; display: flex; align-items: center; gap: 10px; margin-right: 1px; padding: 0 19px 0 9px; border-right: 1px solid #7b8490; }
.tray time { text-align: center; line-height: 18px; }
.notices { margin-left: auto; }

.ink { position: absolute; top: -3px; left: -3px; width: calc(100% + 6px); height: calc(100% + 6px); pointer-events: none; z-index: 2; }
```
